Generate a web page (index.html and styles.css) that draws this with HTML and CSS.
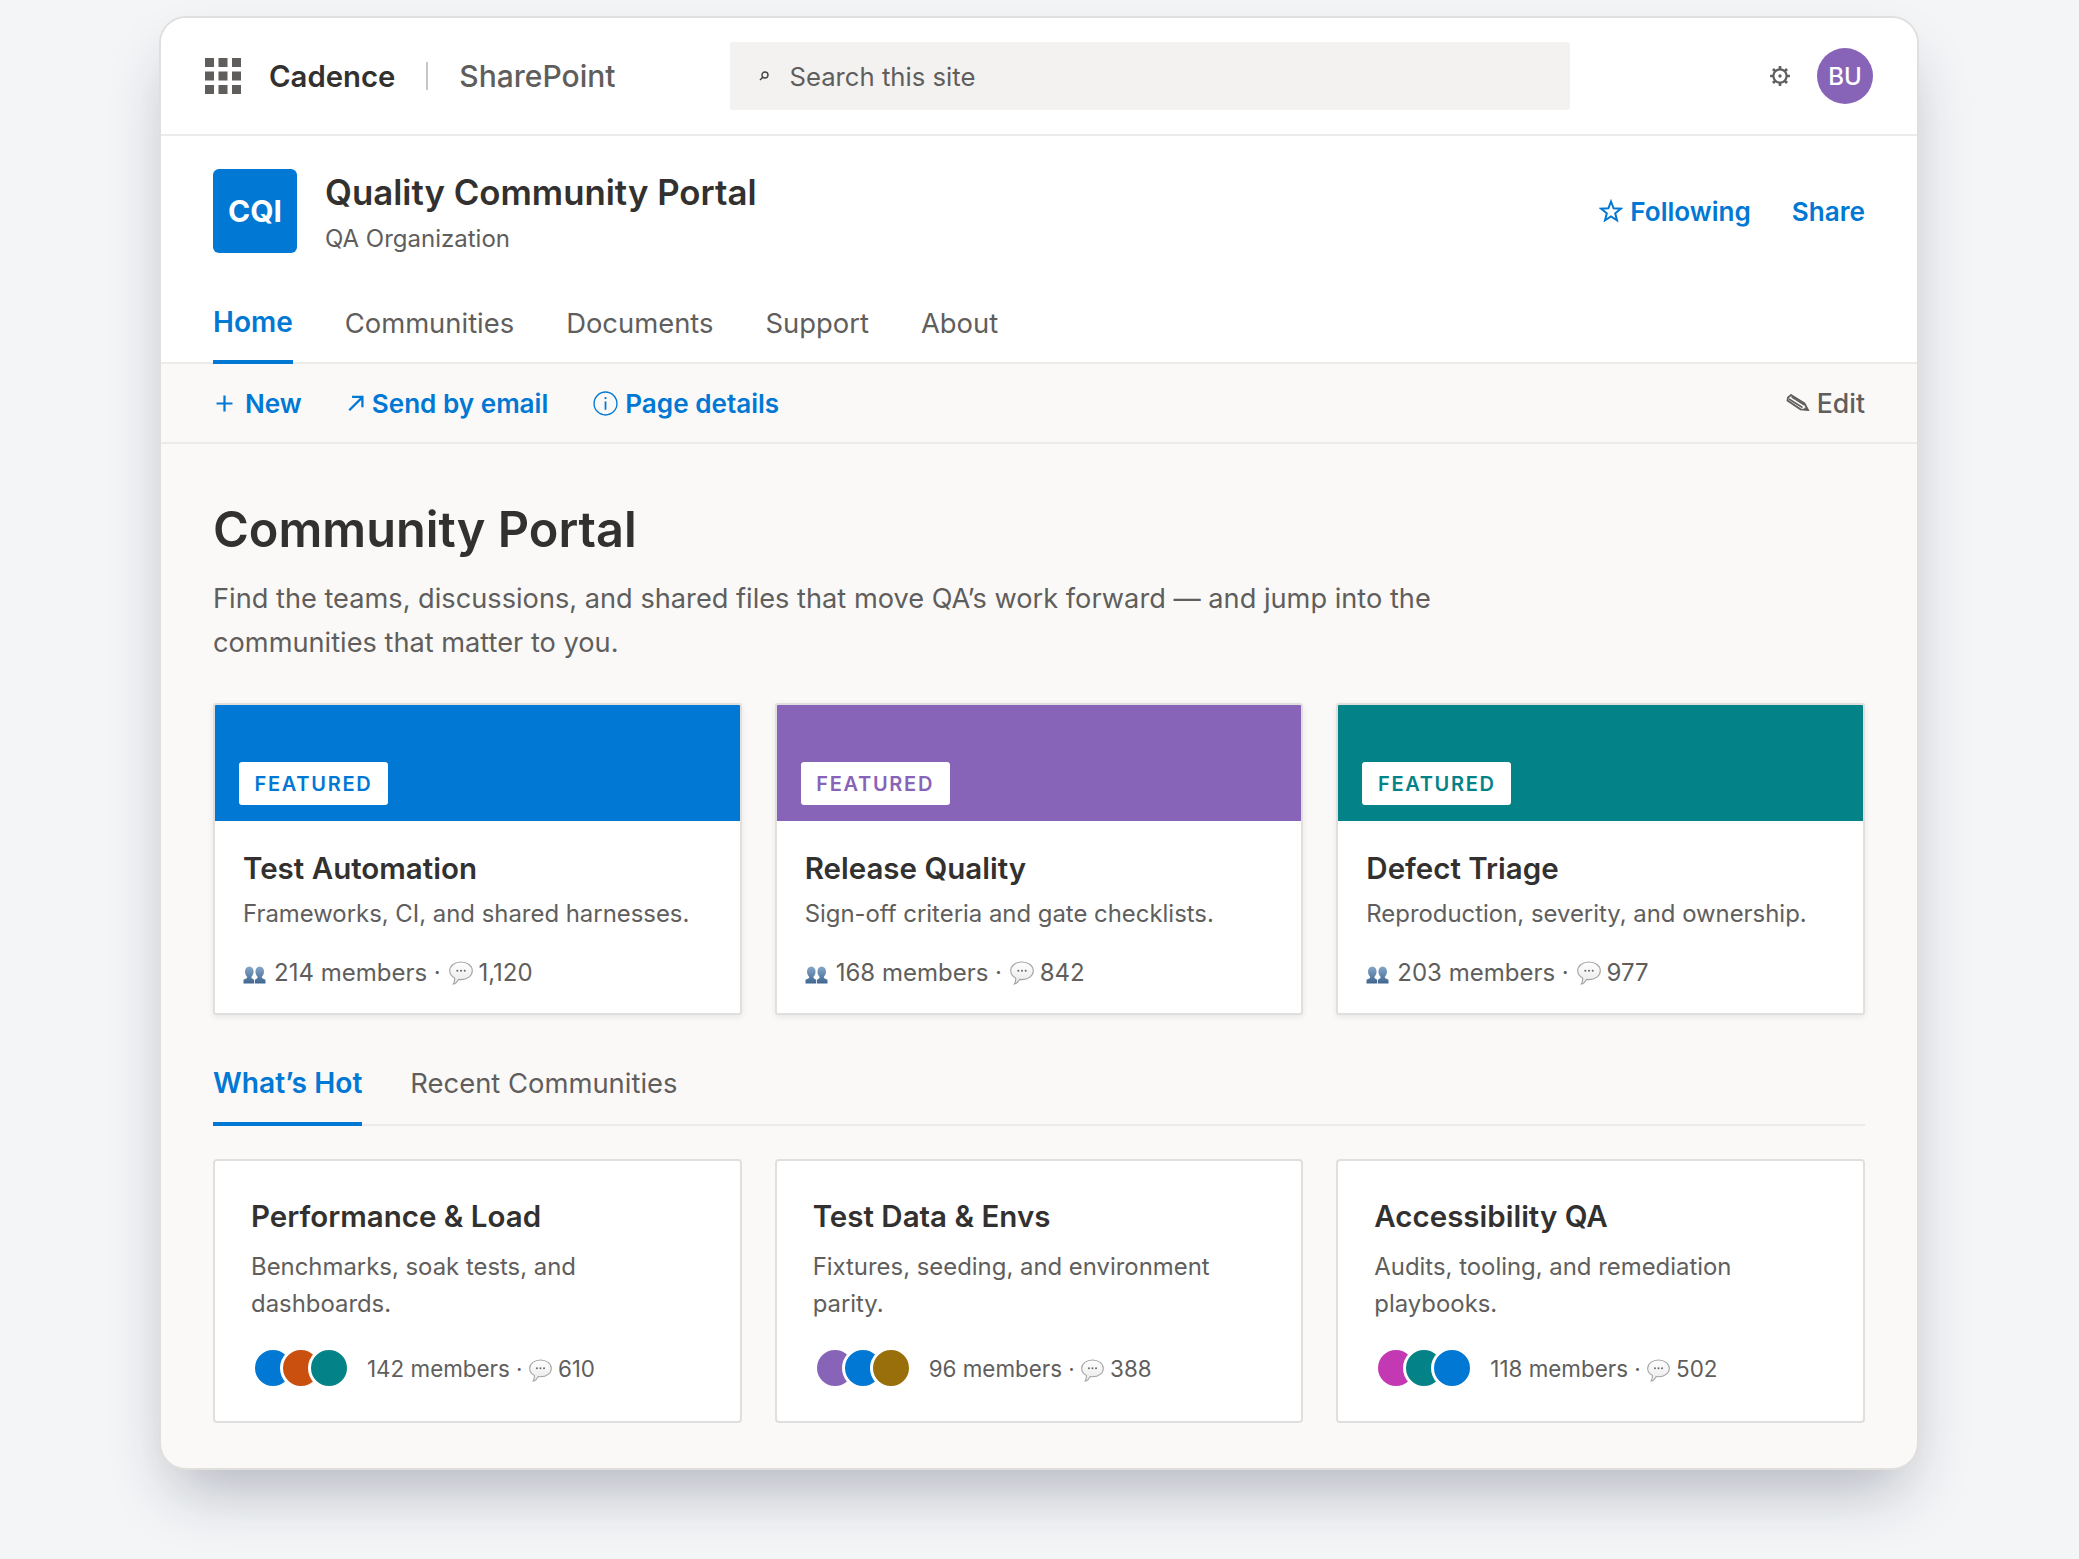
FILE: index.html
```html
<!DOCTYPE html>
<html lang="en">
<head>
<meta charset="utf-8">
<title>Quality Community Portal</title>
<link rel="stylesheet" href="styles.css">
</head>
<body>
<svg class="defs" width="0" height="0" aria-hidden="true">
  <defs>
    <linearGradient id="pg" x1="0" y1="0" x2="0" y2="1"><stop offset="0" stop-color="#86a7c9"/><stop offset="1" stop-color="#3f668f"/></linearGradient>
    <linearGradient id="bg" x1="0" y1="0" x2="0" y2="1"><stop offset="0" stop-color="#ffffff"/><stop offset="1" stop-color="#e9e9e9"/></linearGradient>
    <symbol id="people" viewBox="0 0 24 19">
      <path fill="url(#pg)" d="M6.500 0.500C9.300 0.500 11 2.800 11 5.800 11 8.300 10 10.200 8.800 11.300V12.700L11.600 14.500V18.500H0.400V14.500L4.200 12.700V11.300C3 10.200 2 8.300 2 5.800 2 2.800 3.700 0.500 6.500 0.500Z"/>
      <path fill="url(#pg)" d="M17.500 0.500C20.300 0.500 22 2.800 22 5.800 22 8.300 21 10.200 19.800 11.300V12.700L23.600 14.500V18.500H12.400V14.500L15.200 12.700V11.300C14 10.200 13 8.300 13 5.800 13 2.800 14.700 0.500 17.500 0.500Z"/>
    </symbol>
    <symbol id="bubble" viewBox="0 0 24 24">
      <path fill="url(#bg)" stroke="#a3a3a3" stroke-width="1.100" d="M12 1C18.200 1 23.300 4.800 23.300 9.800S18.200 18.600 12 18.600C11 18.600 10.200 18.500 9.500 18.400 8.500 20.200 6.500 22.800 4.300 23 5.400 21.300 5.900 19 5.700 17.100 2.700 15.500 0.700 12.900 0.700 9.800 0.700 4.800 5.800 1 12 1Z"/>
      <circle cx="8.300" cy="9.700" r="1" fill="#666"/><circle cx="12" cy="9.700" r="1" fill="#666"/><circle cx="15.700" cy="9.700" r="1" fill="#666"/>
    </symbol>
  </defs>
</svg>
<main class="window">
  <header class="topbar">
    <svg class="waffle" viewBox="0 0 36 36" aria-hidden="true"><g fill="#605e5c"><rect width="9" height="9"/><rect x="13.500" width="9" height="9"/><rect x="27" width="9" height="9"/><rect y="13.500" width="9" height="9"/><rect x="13.500" y="13.500" width="9" height="9"/><rect x="27" y="13.500" width="9" height="9"/><rect y="27" width="9" height="9"/><rect x="13.500" y="27" width="9" height="9"/><rect x="27" y="27" width="9" height="9"/></g></svg>
    <span class="brand">Cadence</span>
    <span class="brand-sep"></span>
    <span class="product">SharePoint</span>
    <div class="search">
      <svg class="search-icon" viewBox="0 0 12 12" aria-hidden="true"><circle cx="7" cy="5" r="3" fill="none" stroke="#444" stroke-width="1.400"/><path d="M4.800 7.200 2 10" stroke="#444" stroke-width="1.500"/></svg>
      <span>Search this site</span>
    </div>
    <svg class="gear" viewBox="0 0 20 20" aria-hidden="true"><circle cx="10" cy="10" r="6" fill="none" stroke="#605e5c" stroke-width="2"/><circle cx="10" cy="10" r="1.500" fill="#605e5c"/><path stroke="#605e5c" stroke-width="2.400" d="M10 1v3M10 16v3M1 10h3M16 10h3M3.600 3.600l2.100 2.100M14.300 14.300l2.100 2.100M3.600 16.400l2.100-2.100M14.300 5.700l2.100-2.100"/></svg>
    <div class="avatar">BU</div>
  </header>

  <section class="site">
    <div class="site-head">
      <div class="logo">CQI</div>
      <div class="site-names">
        <div class="site-title">Quality Community Portal</div>
        <div class="site-sub">QA Organization</div>
      </div>
      <div class="site-actions">
        <span class="action"><svg class="star" viewBox="0 0 24 24" aria-hidden="true"><path fill="none" stroke="#0078d4" stroke-width="2" d="M12 2.500 14.600 9.300 21.800 9.700 16.200 14.300 18 21.300 12 17.400 6 21.300 7.800 14.300 2.200 9.700 9.400 9.300Z"/></svg>Following</span>
        <span class="action">Share</span>
      </div>
    </div>
    <nav class="nav">
      <span class="nav-item active">Home</span>
      <span class="nav-item">Communities</span>
      <span class="nav-item">Documents</span>
      <span class="nav-item">Support</span>
      <span class="nav-item">About</span>
    </nav>
  </section>

  <div class="toolbar">
    <span class="tool tool-new"><svg class="ti-plus" viewBox="0 0 16 16" aria-hidden="true"><path stroke="#0078d4" stroke-width="2.100" d="M8 0.500v15M0.500 8h15"/></svg>New</span>
    <span class="tool tool-send"><svg class="ti-arrow" viewBox="0 0 16 16" aria-hidden="true"><path fill="none" stroke="#0078d4" stroke-width="2" d="M2 14.500 13.500 3M4.500 2.500H13.700V11.700"/></svg>Send by email</span>
    <span class="tool tool-info"><svg class="ti-info" viewBox="0 0 24 24" aria-hidden="true"><circle cx="12" cy="12" r="11" fill="none" stroke="#0078d4" stroke-width="1.300"/><path stroke="#0078d4" stroke-width="1.700" d="M12 10v8"/><circle cx="12" cy="6.800" r="1.100" fill="#0078d4"/></svg>Page details</span>
    <span class="tool-edit"><svg class="ti-pencil" viewBox="0 0 24 18" aria-hidden="true"><path fill="#fff" stroke="#605e5c" stroke-width="1.800" d="M2.500 3.500 5.500 1 19 9.500 22.500 16 15 15.300 2 6.500Z"/><path stroke="#605e5c" stroke-width="1.500" d="M3.500 5 17 13.500M6 2.800 19 11"/><path fill="#605e5c" d="M19.500 13 22.800 16.400 18 16Z"/></svg>Edit</span>
  </div>

  <section class="content">
    <h1 class="page-title">Community Portal</h1>
    <p class="lead">Find the teams, discussions, and shared files that move QA’s work forward — and jump into the communities that matter to you.</p>

    <div class="grid featured">
      <article class="fcard">
        <div class="banner blue"><span class="badge t-blue">FEATURED</span></div>
        <div class="fbody">
          <h2 class="ctitle">Test Automation</h2>
          <p class="fdesc">Frameworks, CI, and shared harnesses.</p>
          <div class="fmeta"><svg class="i-people"><use href="#people"/></svg>214 members · <svg class="i-bubble"><use href="#bubble"/></svg>1,120</div>
        </div>
      </article>
      <article class="fcard">
        <div class="banner purple"><span class="badge t-purple">FEATURED</span></div>
        <div class="fbody">
          <h2 class="ctitle">Release Quality</h2>
          <p class="fdesc">Sign-off criteria and gate checklists.</p>
          <div class="fmeta"><svg class="i-people"><use href="#people"/></svg>168 members · <svg class="i-bubble"><use href="#bubble"/></svg>842</div>
        </div>
      </article>
      <article class="fcard">
        <div class="banner teal"><span class="badge t-teal">FEATURED</span></div>
        <div class="fbody">
          <h2 class="ctitle">Defect Triage</h2>
          <p class="fdesc">Reproduction, severity, and ownership.</p>
          <div class="fmeta"><svg class="i-people"><use href="#people"/></svg>203 members · <svg class="i-bubble"><use href="#bubble"/></svg>977</div>
        </div>
      </article>
    </div>

    <div class="tabs">
      <span class="tab active">What’s Hot</span>
      <span class="tab">Recent Communities</span>
    </div>

    <div class="grid hot">
      <article class="hcard">
        <h2 class="ctitle">Performance &amp; Load</h2>
        <p class="hdesc">Benchmarks, soak tests, and dashboards.</p>
        <div class="hmeta">
          <div class="stack"><i class="dot c-blue"></i><i class="dot c-orange"></i><i class="dot c-teal"></i></div>
          <span>142 members · <svg class="i-bubble small"><use href="#bubble"/></svg>610</span>
        </div>
      </article>
      <article class="hcard">
        <h2 class="ctitle">Test Data &amp; Envs</h2>
        <p class="hdesc">Fixtures, seeding, and environment parity.</p>
        <div class="hmeta">
          <div class="stack"><i class="dot c-purple"></i><i class="dot c-blue"></i><i class="dot c-gold"></i></div>
          <span>96 members · <svg class="i-bubble small"><use href="#bubble"/></svg>388</span>
        </div>
      </article>
      <article class="hcard">
        <h2 class="ctitle">Accessibility QA</h2>
        <p class="hdesc">Audits, tooling, and remediation playbooks.</p>
        <div class="hmeta">
          <div class="stack"><i class="dot c-magenta"></i><i class="dot c-teal"></i><i class="dot c-blue"></i></div>
          <span>118 members · <svg class="i-bubble small"><use href="#bubble"/></svg>502</span>
        </div>
      </article>
    </div>
  </section>
</main>
</body>
</html>
```
FILE: styles.css
```css
* { box-sizing: border-box; }
html, body { margin: 0; padding: 0; }
body {
  width: 2079px;
  height: 1559px;
  overflow: hidden;
  background: #f3f5f7;
  font-family: Inter, "Liberation Sans", sans-serif;
  color: #323130;
  padding-top: 16px;
}
.defs { position: absolute; }
.window {
  width: 1760px;
  height: 1454px;
  margin-left: 159px;
  background: #faf9f8;
  border: 2px solid #e1dfdd;
  border-radius: 27px;
  box-shadow: 0 32px 64px -16px rgba(30, 35, 60, 0.32);
  overflow: hidden;
}
.topbar {
  height: 118px;
  background: #fff;
  border-bottom: 2px solid #edebe9;
  display: flex;
  align-items: center;
  padding: 0 44px 0 44px;
}
.waffle { width: 36px; height: 36px; flex: none; }
.brand { margin-left: 28px; font-size: 29.300px; font-weight: 600; }
.brand-sep { width: 2px; height: 28px; background: #c8c6c4; margin: 0 31px; }
.product { font-size: 30px; font-weight: 500; color: #605e5c; }
.search {
  margin-left: 115px;
  width: 840px;
  height: 68px;
  background: #f3f2f1;
  border-radius: 3px;
  display: flex;
  align-items: center;
  padding-left: 28px;
  font-size: 25.700px;
  color: #605e5c;
}
.search-icon { width: 12px; height: 12px; margin-right: 19px; }
.gear { width: 22px; height: 22px; margin-left: auto; margin-right: 26px; }
.avatar {
  width: 56px;
  height: 56px;
  border-radius: 50%;
  background: #8764b8;
  color: #fff;
  font-size: 24px;
  font-weight: 500;
  display: flex;
  align-items: center;
  justify-content: center;
}
.site { background: #fff; border-bottom: 2px solid #edebe9; }
.site-head {
  height: 117px;
  display: flex;
  align-items: center;
  padding: 33px 52px 0 52px;
}
.logo {
  width: 84px;
  height: 84px;
  background: #0078d4;
  border-radius: 6px;
  color: #fff;
  font-size: 30px;
  font-weight: 700;
  display: flex;
  align-items: center;
  justify-content: center;
}
.site-names { margin-left: 28px; margin-top: 2px; }
.site-title { font-size: 34.800px; font-weight: 600; line-height: 47px; }
.site-sub { font-size: 24px; color: #605e5c; line-height: 32px; margin-top: 7px; }
.site-actions { margin-left: auto; display: flex; gap: 41px; align-items: center; }
.action {
  font-size: 26.100px;
  font-weight: 600;
  color: #0078d4;
  display: flex;
  align-items: center;
}
.star { width: 24px; height: 24px; margin-right: 7px; }
.nav { display: flex; gap: 52px; padding: 0 52px; margin-top: 37px; }
.nav-item {
  font-size: 27.400px;
  color: #605e5c;
  height: 74px;
  padding-top: 14px;
  line-height: 38px;
  margin-bottom: -2px;
}
.nav-item.active {
  color: #0078d4;
  font-size: 28px;
  font-weight: 600;
  padding-top: 13px;
  border-bottom: 4px solid #0078d4;
}
.toolbar {
  height: 80px;
  background: #faf9f8;
  border-bottom: 2px solid #edebe9;
  display: flex;
  align-items: center;
  padding: 0 52px;
  font-size: 26.100px;
  font-weight: 600;
  color: #0078d4;
}
.tool { display: flex; align-items: center; }
.tool-new { margin-left: 3px; }
.ti-plus { width: 17px; height: 17px; margin-right: 12px; }
.tool-send { margin-left: 45px; }
.ti-arrow { width: 18px; height: 18px; margin-right: 7px; }
.tool-info { margin-left: 45px; }
.ti-info { width: 25px; height: 25px; margin-right: 7px; }
.tool-edit { margin-left: auto; color: #605e5c; font-weight: 500; font-size: 26.600px; display: flex; align-items: center; }
.ti-pencil { width: 25px; height: 18px; margin-right: 7px; }
.content { padding: 53px 52px 0 52px; }
.page-title { margin: 0; font-size: 48.700px; font-weight: 600; line-height: 66px; }
.lead {
  margin: 14px 0 0;
  max-width: 1240px;
  font-size: 27.200px;
  line-height: 44px;
  color: #605e5c;
}
.grid { display: grid; grid-template-columns: repeat(3, 1fr); gap: 33px; }
.featured { margin-top: 38px; }
.fcard {
  height: 312px;
  background: #fff;
  border: 2px solid #e1dfdd;
  border-radius: 3px;
  box-shadow: 0 2px 6px rgba(0, 0, 0, 0.08);
  overflow: hidden;
}
.banner { height: 116px; display: flex; align-items: flex-end; padding: 0 0 16px 24px; }
.blue { background: #0078d4; }
.purple { background: #8764b8; }
.teal { background: #038387; }
.badge {
  height: 43px;
  width: 149px;
  background: #fff;
  border-radius: 3px;
  font-size: 20px;
  font-weight: 600;
  letter-spacing: 1.700px;
  display: flex;
  align-items: center;
  justify-content: center;
}
.t-blue { color: #0078d4; }
.t-purple { color: #8764b8; }
.t-teal { color: #038387; }
.fbody { padding: 27px 28px 0; }
.ctitle { margin: 0; font-size: 29.500px; font-weight: 600; line-height: 40px; }
.fdesc { margin: 8px 0 0; font-size: 23.900px; line-height: 36px; color: #605e5c; }
.fmeta { margin-top: 23px; font-size: 24px; line-height: 36px; color: #605e5c; display: flex; align-items: center; white-space: pre; }
.i-people { width: 23px; height: 18px; margin-right: 8px; position: relative; top: 2px; }
.i-bubble { width: 24px; height: 24px; margin: 0 6px 0 1px; }
.i-bubble.small { width: 23px; height: 23px; vertical-align: -5px; margin: 0 6px 0 0; }
.tabs {
  margin-top: 46px;
  display: flex;
  gap: 48px;
  border-bottom: 2px solid #edebe9;
  height: 65px;
}
.tab { font-size: 27.400px; color: #605e5c; line-height: 40px; padding-top: 2px; }
.tab.active { color: #0078d4; font-size: 28.200px; font-weight: 600; border-bottom: 4px solid #0078d4; height: 65px; }
.hot { margin-top: 33px; }
.hcard {
  height: 264px;
  background: #fff;
  border: 2px solid #e1dfdd;
  border-radius: 4px;
  padding: 35px 36px 0;
}
.hdesc { margin: 12px 0 0; font-size: 23.900px; line-height: 37px; color: #605e5c; max-width: 420px; }
.hmeta { margin-top: 25px; display: flex; align-items: center; font-size: 22.400px; color: #605e5c; }
.stack { display: flex; padding-left: 1px; margin-right: 17px; }
.dot {
  width: 42px;
  height: 42px;
  border-radius: 50%;
  border: 3px solid #fff;
  margin-left: -14px;
  display: block;
}
.dot:first-child { margin-left: 0; }
.c-blue { background: #0078d4; }
.c-orange { background: #ca5010; }
.c-teal { background: #038387; }
.c-purple { background: #8764b8; }
.c-gold { background: #986f0b; }
.c-magenta { background: #c239b3; }
```
